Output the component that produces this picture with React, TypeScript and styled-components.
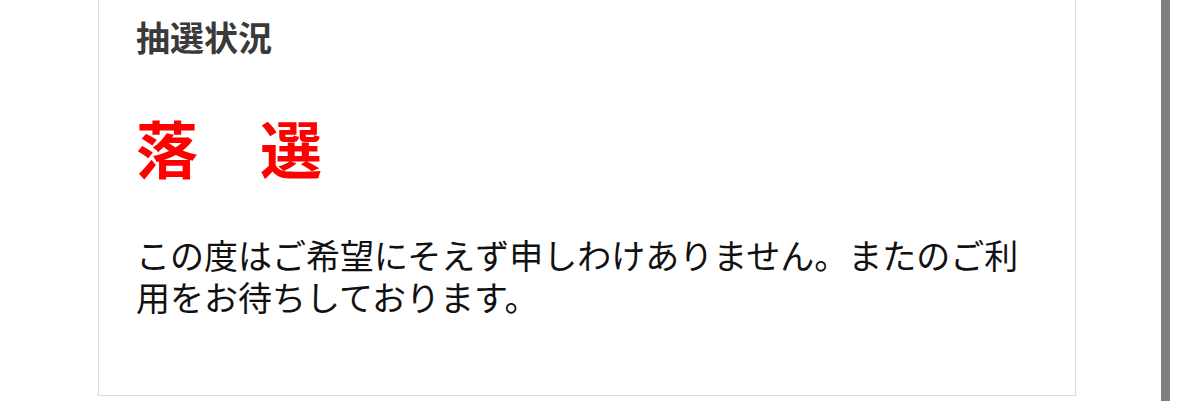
import React from "react";
import styled, { createGlobalStyle } from "styled-components";

const GlobalStyle = createGlobalStyle`
  html, body {
    margin: 0;
    padding: 0;
    background: #fff;
  }
  body {
    font-family: "Noto Sans CJK JP", "Noto Sans", sans-serif;
  }
`;

const Page = styled.div`
  display: flex;
  width: 1179px;
  height: 401px;
  overflow: hidden;
  background: #fff;
`;

const Main = styled.main`
  flex: 1;
  padding-left: 98px;
`;

const Card = styled.section`
  width: 978px;
  box-sizing: border-box;
  border: 1px solid #dcdcdc;
  border-top: none;
  background: #fff;
  padding: 16px 37px 77px;
`;

const Heading = styled.h2`
  margin: 0;
  font-size: 34px;
  line-height: 42px;
  font-weight: 700;
  color: #3a3a3a;
`;

const Result = styled.p`
  margin: 51px 0 0;
  font-size: 62px;
  line-height: 76px;
  font-weight: 700;
  color: #ff0000;
`;

const Message = styled.p`
  margin: 49px 0 0;
  font-size: 34px;
  line-height: 42px;
  font-weight: 400;
  color: #111;
`;

const Rail = styled.div`
  width: 9px;
  margin-right: 9px;
  background: #808080;
`;

export default function App() {
  return (
    <>
      <GlobalStyle />
      <Page>
        <Main>
          <Card>
            <Heading>抽選状況</Heading>
            <Result>落　選</Result>
            <Message>
              この度はご希望にそえず申しわけありません。またのご利用をお待ちしております。
            </Message>
          </Card>
        </Main>
        <Rail />
      </Page>
    </>
  );
}
